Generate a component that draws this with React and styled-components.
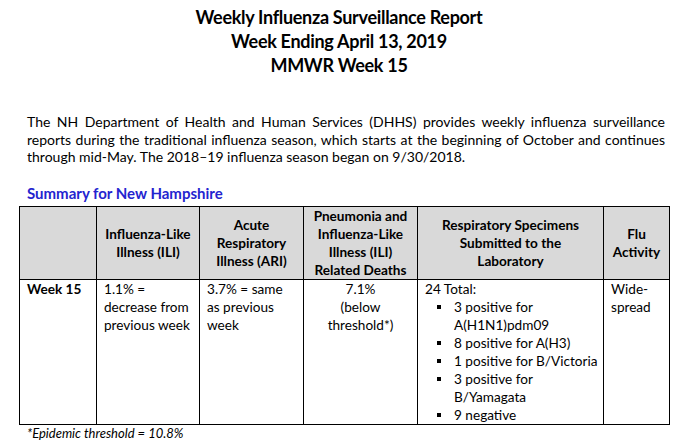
import styled, { createGlobalStyle } from "styled-components";

const GlobalStyle = createGlobalStyle`
  html, body {
    margin: 0;
    padding: 0;
    background: #ffffff;
  }
  body {
    font-family: Lato, "Open Sans", "Liberation Sans", sans-serif;
    color: #000000;
  }
`

const Page = styled.div`
  width: 692px;
  height: 443px;
  overflow: hidden;
  box-sizing: border-box;
  padding: 5px 19px 0 19px;
`

const TitleBlock = styled.div`
  margin-right: 14px;
  text-align: center;
  font-weight: 700;
  font-size: 18px;
  line-height: 24px;
  letter-spacing: -0.3px;
`

const Intro = styled.div`
  margin: 36px 8px 0 8px;
  font-size: 14px;
  line-height: 17.7px;
`

const IntroLine = styled.span`
  display: block;
  text-align: ${(p) => (p.$last ? "left" : "justify")};
  text-align-last: ${(p) => (p.$last ? "left" : "justify")};
`

const Heading = styled.div`
  margin: 18px 0 0 8px;
  font-size: 15px;
  line-height: 18px;
  font-weight: 700;
  color: #2424cf;
`

const Table = styled.table`
  margin-top: 4px;
  width: 650px;
  border-collapse: collapse;
  table-layout: fixed;
  font-size: 13.6px;
  line-height: 18px;
`

const HeadCell = styled.th`
  background: #d9d9d9;
  border: 1.5px solid #000000;
  height: 69px;
  padding: 0 4px;
  font-weight: 700;
  text-align: center;
  vertical-align: middle;
  white-space: nowrap;
`

const Cell = styled.td`
  border: 1.5px solid #000000;
  padding: 0 7px 0 7px;
  vertical-align: top;
  white-space: nowrap;
  text-align: ${(p) => (p.$center ? "center" : "left")};
  font-weight: ${(p) => (p.$bold ? 700 : 400)};
`

const List = styled.ul`
  margin: 0;
  padding: 0 0 0 29px;
  list-style: none;
`

const Item = styled.li`
  position: relative;

  &::before {
    content: "";
    position: absolute;
    left: -17px;
    top: 7px;
    width: 4px;
    height: 4px;
    background: #000000;
  }
`

const Footnote = styled.div`
  margin: 0 0 0 8px;
  font-size: 13px;
  line-height: 16px;
  font-style: italic;
`

const columns = [77, 103, 104, 114, 186, 66]

const specimens = [
  ["3 positive for", "A(H1N1)pdm09"],
  ["8 positive for A(H3)"],
  ["1 positive for B/Victoria"],
  ["3 positive for", "B/Yamagata"],
  ["9 negative"],
]

function lines(parts) {
  return parts.map((t, i) => (
    <span key={i}>
      {i > 0 && <br />}
      {t}
    </span>
  ))
}

export default function App() {
  return (
    <>
      <GlobalStyle />
      <Page>
        <TitleBlock>
          Weekly Influenza Surveillance Report
          <br />
          Week Ending April 13, 2019
          <br />
          MMWR Week 15
        </TitleBlock>

        <Intro>
          <IntroLine>
            The NH Department of Health and Human Services (DHHS) provides weekly influenza surveillance
          </IntroLine>
          <IntroLine>
            reports during the traditional influenza season, which starts at the beginning of October and continues
          </IntroLine>
          <IntroLine $last>
            through mid-May. The 2018–19 influenza season began on 9/30/2018.
          </IntroLine>
        </Intro>

        <Heading>Summary for New Hampshire</Heading>

        <Table>
          <colgroup>
            {columns.map((w, i) => (
              <col key={i} style={{ width: w }} />
            ))}
          </colgroup>
          <thead>
            <tr>
              <HeadCell />
              <HeadCell>{lines(["Influenza-Like", "Illness (ILI)"])}</HeadCell>
              <HeadCell>{lines(["Acute", "Respiratory", "Illness (ARI)"])}</HeadCell>
              <HeadCell>
                {lines(["Pneumonia and", "Influenza-Like", "Illness (ILI)", "Related Deaths"])}
              </HeadCell>
              <HeadCell>
                {lines(["Respiratory Specimens", "Submitted to the", "Laboratory"])}
              </HeadCell>
              <HeadCell>{lines(["Flu", "Activity"])}</HeadCell>
            </tr>
          </thead>
          <tbody>
            <tr>
              <Cell $bold>Week 15</Cell>
              <Cell>{lines(["1.1% =", "decrease from", "previous week"])}</Cell>
              <Cell>{lines(["3.7% = same", "as previous", "week"])}</Cell>
              <Cell $center>{lines(["7.1%", "(below", "threshold*)"])}</Cell>
              <Cell>
                24 Total:
                <List>
                  {specimens.map((s, i) => (
                    <Item key={i}>{lines(s)}</Item>
                  ))}
                </List>
              </Cell>
              <Cell>{lines(["Wide-", "spread"])}</Cell>
            </tr>
          </tbody>
        </Table>

        <Footnote>*Epidemic threshold = 10.8%</Footnote>
      </Page>
    </>
  )
}
